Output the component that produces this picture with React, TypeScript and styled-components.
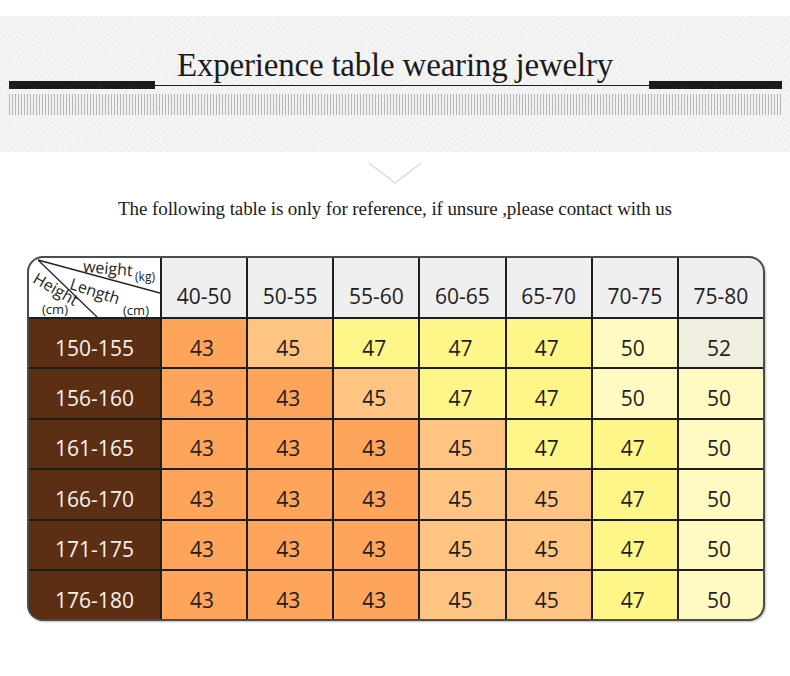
import React, {FunctionComponent} from "react";
import styled, {createGlobalStyle} from "styled-components";

const GlobalStyle = createGlobalStyle`
  html, body {
    margin: 0;
    padding: 0;
    background: #fff;
  }
  body {
    width: 790px;
    font-family: "Open Sans", "Liberation Sans", sans-serif;
  }
`;

const Page = styled.div`
  width: 790px;
  height: 676px;
  overflow: hidden;
  padding-top: 16px;
  box-sizing: border-box;
`;

const Band = styled.header`
  height: 136px;
  background-color: #f2f2f2;
  background-image:
    repeating-linear-gradient(37deg, rgba(255, 255, 255, .35) 0 1px, transparent 1px 4px),
    repeating-linear-gradient(-52deg, rgba(225, 225, 225, .35) 0 1px, transparent 1px 5px);
  padding-top: 30px;
  box-sizing: border-box;
`;

const Title = styled.h1`
  margin: 0;
  text-align: center;
  font-family: "Liberation Serif", "DejaVu Serif", serif;
  font-weight: normal;
  font-size: 33px;
  line-height: 38px;
  color: #1b1b1b;
  letter-spacing: -.2px;
`;

const Rule = styled.div`
  display: flex;
  align-items: center;
  height: 8px;
  margin: -3px 8px 0 9px;
`;

const ThickBar = styled.span<{ $width: number }>`
  width: ${p => p.$width}px;
  height: 8px;
  background: #1c1c1c;
  flex-shrink: 0;
`;

const ThinLine = styled.span`
  flex: 1;
  height: 1px;
  background: #1c1c1c;
`;

const Stripes = styled.div`
  height: 21px;
  margin: 5px 8px 0 9px;
  background: repeating-linear-gradient(90deg, #b4b4b4 0 1px, transparent 1px 3px);
`;

const Chevron = styled.svg`
  display: block;
  margin: 10px auto 0;
`;

const Subtitle = styled.p`
  margin: 12px 0 0;
  text-align: center;
  font-family: "Liberation Serif", "DejaVu Serif", serif;
  font-size: 19px;
  line-height: 25px;
  color: #1b1b1b;
  letter-spacing: -.1px;
`;

const Table = styled.div`
  margin: 35px 0 0 27px;
  width: 738px;
  box-sizing: border-box;
  border: 2px solid #4c4c4c;
  border-radius: 16px;
  overflow: hidden;
  display: grid;
  grid-template-columns: 131px repeat(7, 1fr);
  grid-template-rows: 59px repeat(6, 48.4px);
  gap: 2px;
  background: #1e1e1e;
  box-shadow: 1px 1px 2px rgba(0, 0, 0, .25);
`;

const Corner = styled.div`
  position: relative;
  background: #fff;
  color: #222;
`;

const CornerLines = styled.svg`
  position: absolute;
  inset: 0;
`;

const Label = styled.span<{ $x: number; $y: number; $size: number; $rot?: number }>`
  position: absolute;
  left: ${p => p.$x}px;
  top: ${p => p.$y}px;
  font-size: ${p => p.$size}px;
  line-height: 1;
  white-space: nowrap;
  transform: translate(-50%, -50%) rotate(${p => p.$rot || 0}deg);
`;

const HeadCell = styled.div`
  background: #efefef;
  display: flex;
  justify-content: center;
  align-items: center;
  padding-top: 17px;
  box-sizing: border-box;
  font-size: 21px;
  color: #1e1e1e;
`;

const RowHead = styled.div`
  background: #5c2e13;
  display: flex;
  justify-content: center;
  align-items: center;
  padding-top: 9px;
  box-sizing: border-box;
  font-size: 21px;
  color: #f8f3ee;
`;

const cellColors: Record<number, string> = {
  43: "#ffa45b",
  45: "#ffc382",
  47: "#fff68a",
  50: "#fff9c2",
  52: "#efeedf",
};

const Cell = styled.div<{ $value: number }>`
  background: ${p => cellColors[p.$value]};
  display: flex;
  justify-content: center;
  align-items: center;
  padding-top: 9px;
  padding-right: 4px;
  box-sizing: border-box;
  font-size: 21px;
  color: #1e1e1e;
`;

const weights = ["40-50", "50-55", "55-60", "60-65", "65-70", "70-75", "75-80"];

const rows: { height: string; values: number[] }[] = [
  {height: "150-155", values: [43, 45, 47, 47, 47, 50, 52]},
  {height: "156-160", values: [43, 43, 45, 47, 47, 50, 50]},
  {height: "161-165", values: [43, 43, 43, 45, 47, 47, 50]},
  {height: "166-170", values: [43, 43, 43, 45, 45, 47, 50]},
  {height: "171-175", values: [43, 43, 43, 45, 45, 47, 50]},
  {height: "176-180", values: [43, 43, 43, 45, 45, 47, 50]},
];

const App: FunctionComponent = () => {
  return (
    <Page>
      <GlobalStyle/>
      <Band>
        <Title>Experience table wearing jewelry</Title>
        <Rule>
          <ThickBar $width={146}/>
          <ThinLine/>
          <ThickBar $width={133}/>
        </Rule>
        <Stripes/>
      </Band>
      <Chevron width="54" height="22" viewBox="0 0 54 22">
        <polyline points="1,1 27,21 53,1" fill="none" stroke="#dcdcdc" strokeWidth="1.5"/>
      </Chevron>
      <Subtitle>The following table is only for reference, if unsure ,please contact with us</Subtitle>
      <Table>
        <Corner>
          <CornerLines width="131" height="59" viewBox="0 0 131 59">
            <line x1="9" y1="2" x2="131" y2="35" stroke="#222" strokeWidth="1.3"/>
            <line x1="9" y1="2" x2="68" y2="59" stroke="#222" strokeWidth="1.3"/>
          </CornerLines>
          <Label $x={79} $y={10} $size={16} $rot={5}>weight</Label>
          <Label $x={116} $y={19} $size={12}>(kg)</Label>
          <Label $x={66} $y={33} $size={16} $rot={18}>Length</Label>
          <Label $x={107} $y={52} $size={13}>(cm)</Label>
          <Label $x={27} $y={31} $size={16} $rot={30}>Height</Label>
          <Label $x={26} $y={51} $size={13}>(cm)</Label>
        </Corner>
        {weights.map(w => (
          <HeadCell key={w}>{w}</HeadCell>
        ))}
        {rows.map(row => (
          <React.Fragment key={row.height}>
            <RowHead>{row.height}</RowHead>
            {row.values.map((v, i) => (
              <Cell $value={v} key={i}>{v}</Cell>
            ))}
          </React.Fragment>
        ))}
      </Table>
    </Page>
  );
};

export default App;
